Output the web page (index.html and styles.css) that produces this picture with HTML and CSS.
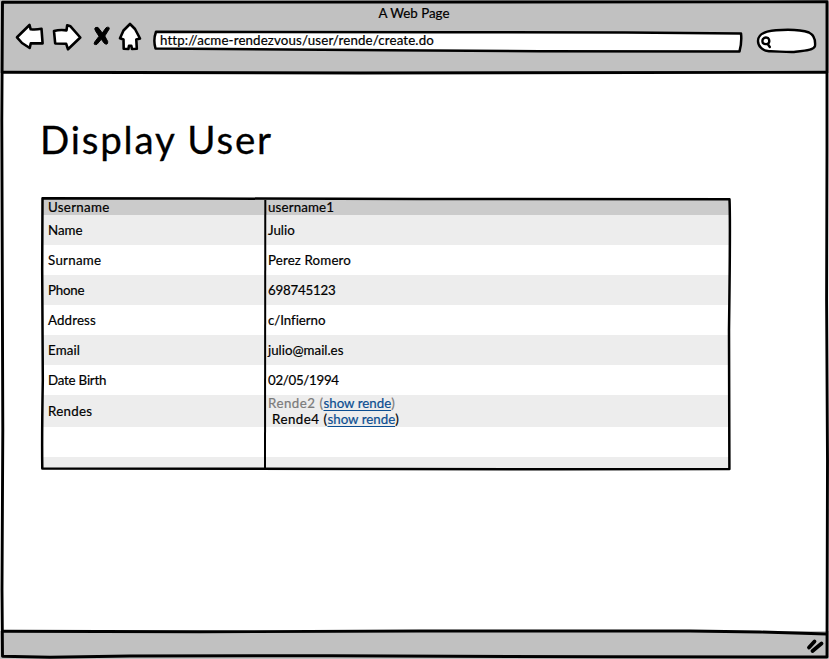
FILE: index.html
```html
<!DOCTYPE html>
<html lang="en">
<head>
<meta charset="utf-8">
<title>A Web Page</title>
<link rel="stylesheet" href="styles.css">
</head>
<body>
<div class="window">
  <header class="chrome">
    <div class="title"><span>A Web Page</span></div>
    <div class="toolbar">
      <svg class="nav" width="136" height="34" viewBox="10 20 136 34">
        <g fill="#fff" stroke="#000" stroke-width="2.6" stroke-linejoin="round" stroke-linecap="round">
          <path d="M17 37.3 29.5 25 30.7 29.3Q36 29.8 41.5 28.8L42.6 43.4 30.8 43.2 29.7 48 22 43Z"/>
          <path d="M54 31Q60 29.5 66.5 30.4L67.2 25.2 70.5 26.3 80.3 37.5 68 49.3 66.2 43.8 55.2 43.5Z"/>
          <path d="M130 24 135 29 140 38.5 136.3 39.5 136.8 48.7 132 49 131.3 45.8 129 45.7 128.4 49 123.7 48.8 123.5 39.5 120 38.3 123.5 30.5Z"/>
        </g>
        <path stroke="#000" stroke-width="1" stroke-linejoin="round" d="M95.5 27.5Q98 26 100 30L102.3 33 106 27.8Q109.5 26 109.2 29L104.8 36 107.7 41.5Q108 45.5 104.5 43.5L101.3 39.3 97 44.3Q93 45.5 94.7 42L99 36.3 95.6 31Q94 28.5 95.5 27.5Z"/>
      </svg>
      <div class="address">
        <svg class="box" width="592" height="26" viewBox="152 28 592 26"><path d="M156 31.8Q300 32.4 450 32.2T741 33.4Q742 42 739.5 51.4L540 51.3 390 50.3 155.5 48.5Q153 40 156 31.8Z" fill="#fff" stroke="#000" stroke-width="2.5" stroke-linejoin="round"/></svg>
        <span class="url">http://acme-rendezvous/user/rende/create.do</span>
      </div>
      <svg class="search" width="64" height="28" viewBox="755 27 64 28">
        <path d="M758 41C758 34 765 31 776 30.2 788 29.3 802 30 809 32.5 814 35 815.5 41 815 46 814 50.5 802 51 794 52 784 52.3 776 51 769 51.3 762 50.5 758 46 758 41Z" fill="#fff" stroke="#000" stroke-width="2.4"/>
        <path d="M763 39Q765 36.5 768 38 770.3 40.5 768.5 43.5 765 45 762.8 42.8 762 40.5 763 39ZM767.5 43.8 769.8 47" fill="none" stroke="#000" stroke-width="2.4" stroke-linecap="round"/>
      </svg>
    </div>
  </header>
  <main class="page">
    <h1><span>Display User</span></h1>
    <div class="grid">
      <div class="row head"><div><span class="wide">Username</span></div><div><span class="open">username1</span></div></div>
      <div class="row alt"><div><span>Name</span></div><div><span>Julio</span></div></div>
      <div class="row"><div><span class="wide">Surname</span></div><div><span class="open">Perez Romero</span></div></div>
      <div class="row alt"><div><span class="tight">Phone</span></div><div><span class="tight">698745123</span></div></div>
      <div class="row"><div><span class="open">Address</span></div><div><span class="street">c/Infierno</span></div></div>
      <div class="row alt"><div><span class="open">Email</span></div><div><span>julio@mail.es</span></div></div>
      <div class="row"><div><span class="tight">Date Birth</span></div><div><span class="date">02/05/1994</span></div></div>
      <div class="row alt tall"><div><span class="wide">Rendes</span></div><div class="rendes"><span class="muted">Rende2 (<a>show rende</a>)</span><span class="second">Rende4 (<a>show rende</a>)</span></div></div>
      <div class="row"><div></div><div></div></div>
      <div class="row alt last"><div></div><div></div></div>
      <svg class="outline" width="694" height="278" viewBox="39 195 694 278">
        <g fill="none" stroke="#000" stroke-width="2.5" stroke-linejoin="round"><path d="M42.5 198.3 200 198.5 420 199 729.5 199.2Q730.5 220 729 330L729.4 469 560 469.3 250 468.8 42.3 468.5Q41.8 440 42.8 380L42.2 270Z"/><path d="M265.3 200 265 469" stroke-width="2"/></g>
      </svg>
    </div>
  </main>
  <footer class="status">
    <svg class="grip" width="20" height="16" viewBox="805 638 20 16"><path d="M814.5 641.5 809 647.5M821.5 643.5 812.5 651" stroke="#000" stroke-width="3.8" stroke-linecap="round"/></svg>
  </footer>
  <svg class="outline frame" width="829" height="659" viewBox="0 0 829 659">
    <g fill="none" stroke="#000" stroke-width="2.9" stroke-linejoin="round"><path d="M2.5 2.2 827 1.8 827 150 826.6 300 827.5 460 827 657 600 656.8 330 655.7 130 656 50 657.2 2.5 656.3 2 590 2.8 430 1.8 120Z"/><path d="M3 72.2 360 73 827 72.3M3 631.2 200 631.8 420 631 690 631 760 632 827 634"/></g>
  </svg>
</div>
</body>
</html>
```

FILE: styles.css
```css
* { box-sizing: border-box; }
body { margin: 0; background: #fff; color: #000; font: 13.3px/16px Lato, "Open Sans", sans-serif; font-variant-ligatures: none; -webkit-text-stroke: 0.2px; }
svg { display: block; }
.window { position: relative; width: 829px; height: 659px; display: flex; flex-direction: column; overflow: hidden; }
.outline { position: absolute; left: -3px; top: -3px; pointer-events: none; }
.frame { left: 0; top: 0; }
.chrome { height: 73px; background: #c1c1c1; padding-top: 5px; }
.title { text-align: center; height: 15px; padding-right: 1px; }
.toolbar { display: flex; padding-left: 10px; }
.address { position: relative; width: 592px; margin: 8px 11px 0 6px; height: 26px; }
.box { position: absolute; inset: 0; }
.url { position: relative; display: block; padding: 4px 0 0 8px; white-space: nowrap; letter-spacing: 0.14px; }
.search { margin-top: 7px; }
.page { flex: 1; padding: 43px 0 0 42px; }
h1 { margin: 0 0 0 -2px; height: 82px; font-size: 38.5px; line-height: 46px; font-weight: 400; letter-spacing: 1.8px; -webkit-text-stroke: 0.3px; }
.grid { position: relative; width: 688px; }
.row { display: grid; grid-template-columns: 223px 1fr; height: 30px; align-items: center; white-space: nowrap; }
.row > div { padding-left: 6px; }
.row > div + div { padding-left: 3px; }
.head { height: 17px; background: #cbcbcb; }
.alt { background: #ededed; }
.tall { height: 32px; }
.last { height: 12px; }
.open { letter-spacing: 0.15px; }
.wide { letter-spacing: 0.3px; }
.tight { letter-spacing: -0.2px; }
.date { letter-spacing: -0.3px; }
.street { letter-spacing: -0.05px; }
.rendes { display: flex; flex-direction: column; letter-spacing: 0.5px; }
.second { padding-left: 4px; }
.muted { color: #7b7b7b; }
a { color: #0b4d91; text-decoration: underline; text-underline-offset: 2px; letter-spacing: 0; }
.status { height: 28px; background: #c1c1c1; display: flex; justify-content: flex-end; padding: 7px 4px 0 0; }
```
